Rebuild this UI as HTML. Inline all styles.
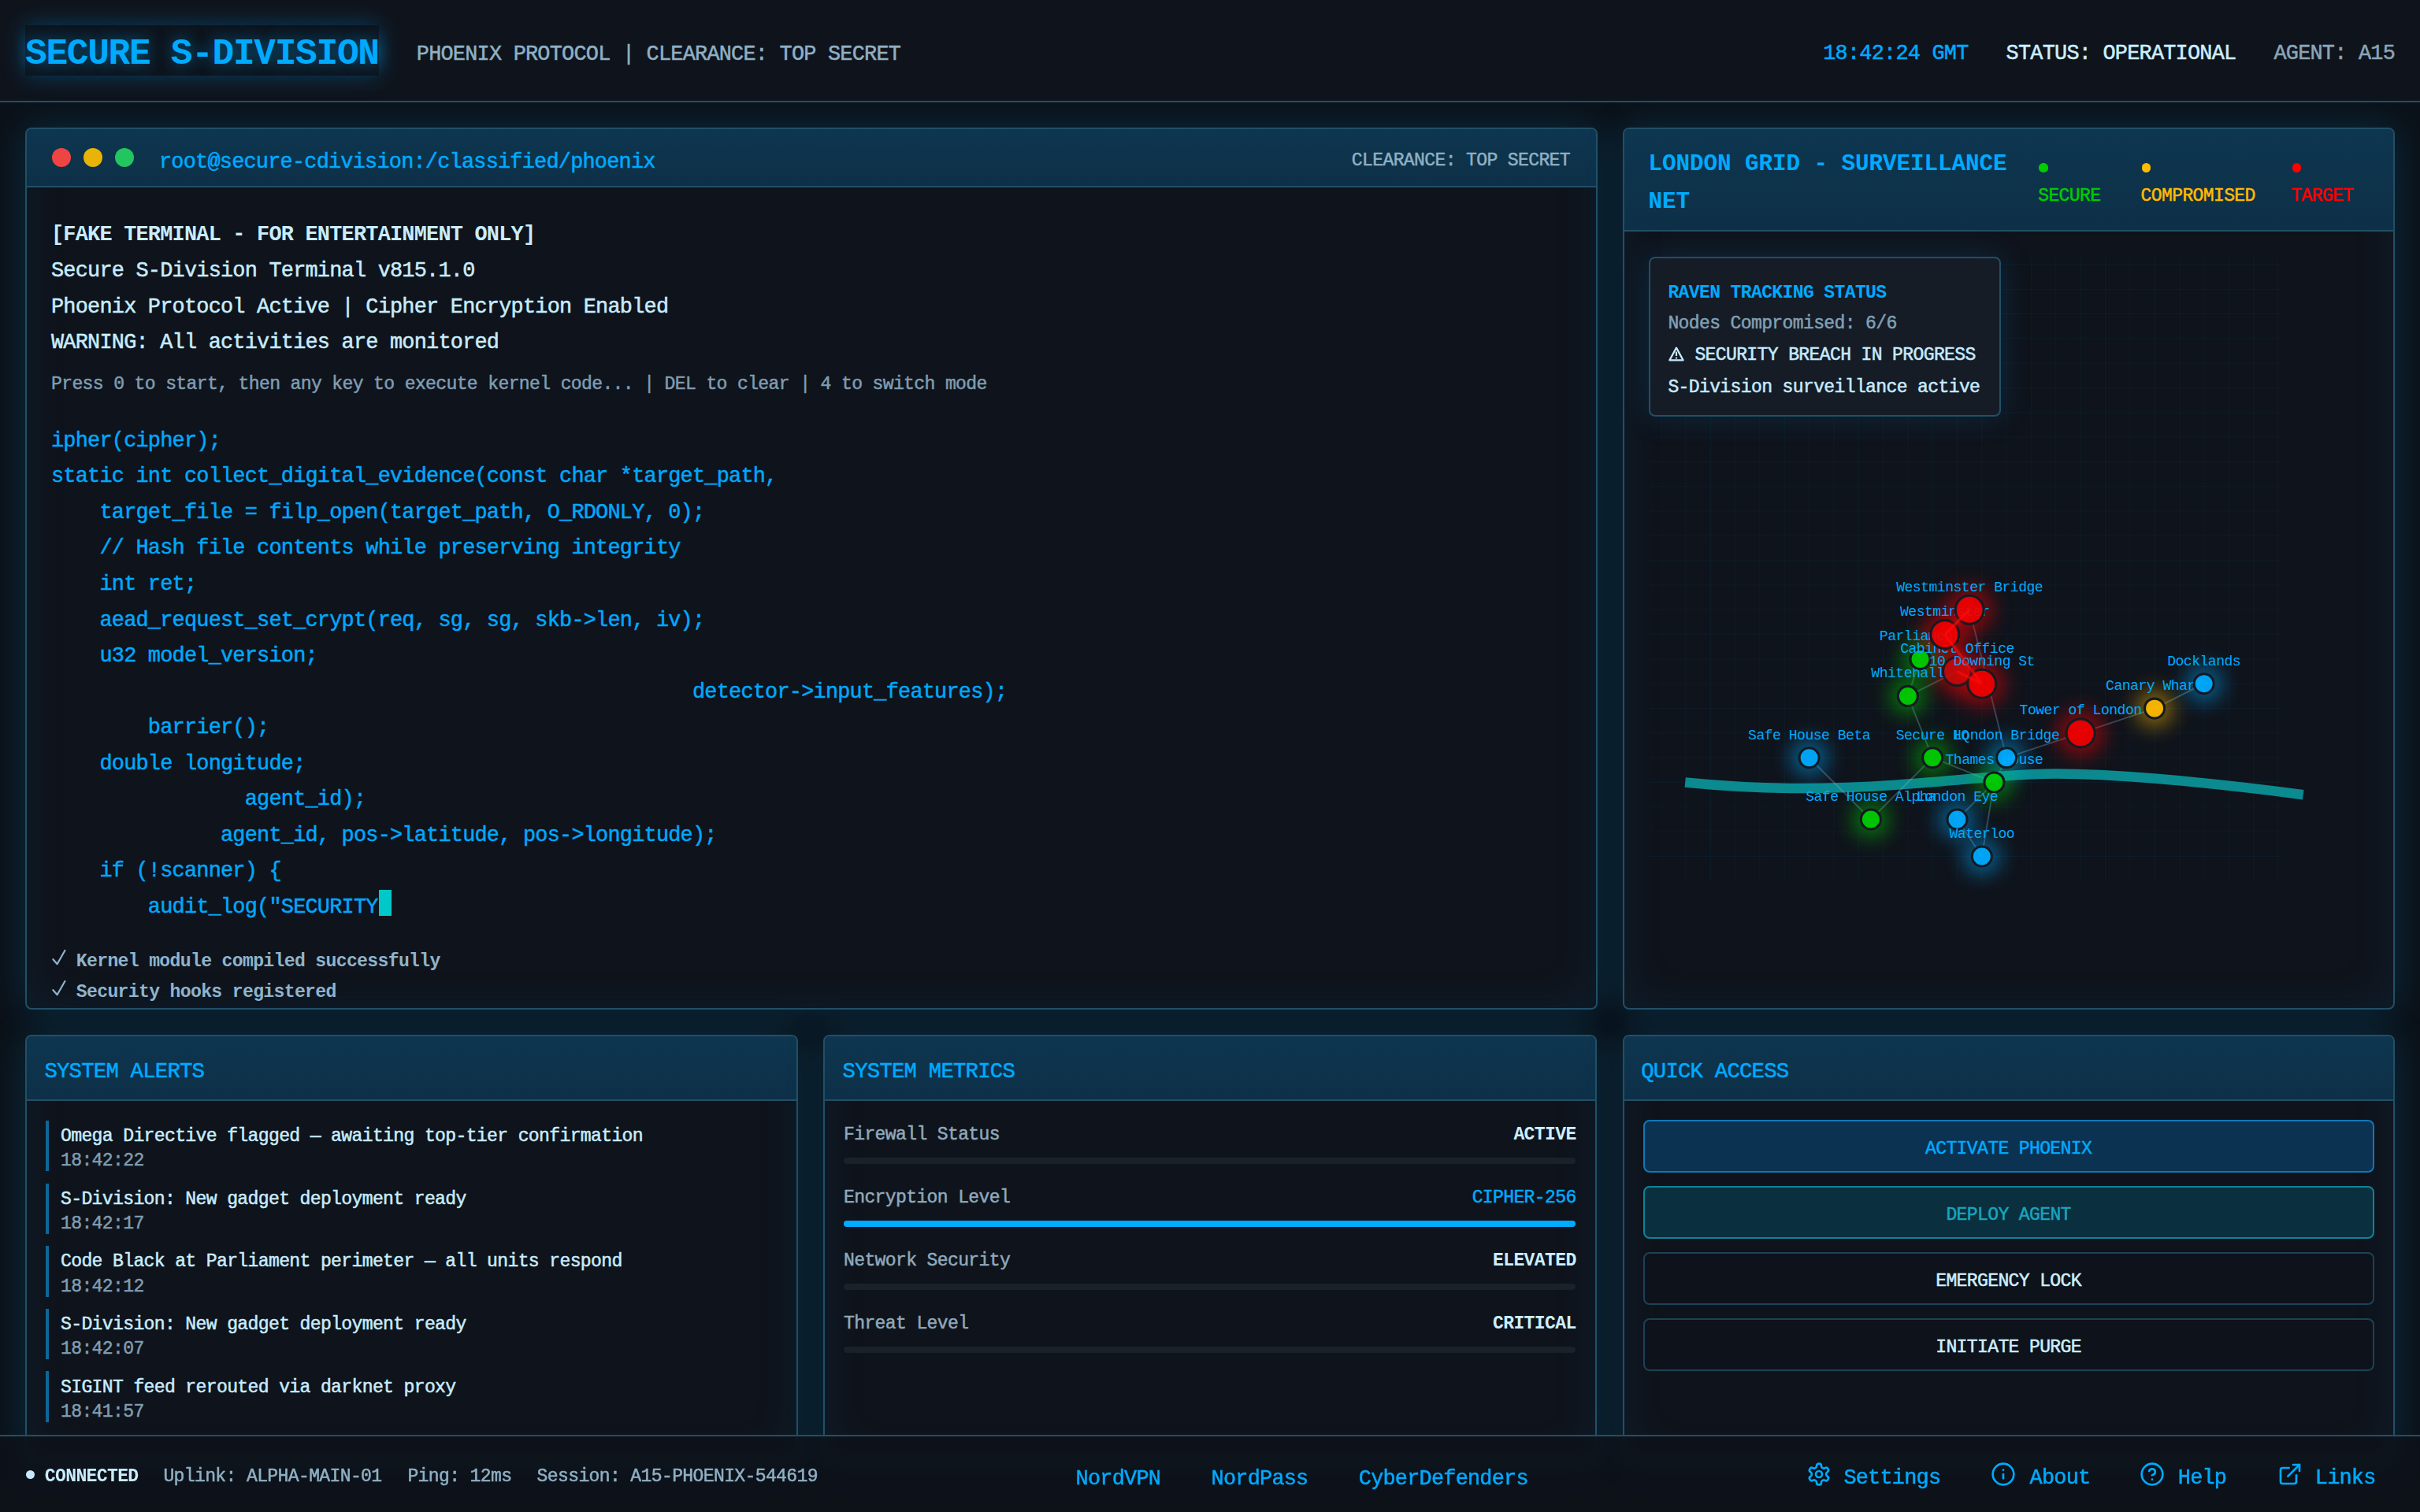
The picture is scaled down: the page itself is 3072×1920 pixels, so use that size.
<!DOCTYPE html><html><head><meta charset="utf-8"><title>Secure S-Division</title><style>
*{box-sizing:border-box;margin:0;padding:0}
html,body{width:1536px;height:960px;overflow:hidden;background:#0b1118}
@media (min-width:2400px){html{zoom:2}}
body{position:relative;font-family:"Liberation Mono", monospace;color:#d8eefc}
.t{position:absolute;white-space:pre;line-height:20px;height:20px;-webkit-text-stroke:0.25px currentColor}
#hdr{position:absolute;left:0;top:0;width:1536px;height:65px;background:#0f141c;border-bottom:1px solid #224f66}
#title{position:absolute;left:16px;top:16px;width:224.5px;height:32px;background:#0d141c;box-shadow:0 0 14px rgba(0,150,230,.35)}
.panel{position:absolute;border:1px solid #224f66;border-radius:4px;background:#0f131b;box-shadow:0 0 24px rgba(0,160,240,.2), inset 0 0 30px rgba(0,160,240,.08);overflow:hidden}
.ph{position:absolute;left:0;top:0;right:0;background:linear-gradient(180deg,#0e3650 0%,#0d3047 100%);border-bottom:1px solid #224f66}
.dot{position:absolute;border-radius:50%}
.chk{position:absolute}
.ic{position:absolute}
#ovl{position:absolute;border:1px solid #224f66;border-radius:4px;background:#161c26;box-shadow:0 0 20px rgba(0,150,230,.18)}
#map{position:absolute;overflow:visible}
.ml{font-family:"Liberation Mono", monospace;font-size:11.55px;letter-spacing:-0.331px;fill:#00aaff}
.btn{position:absolute;border:1px solid;border-radius:4px}
#ftr{position:absolute;left:0;top:911px;width:1536px;height:49px;background:rgba(14,18,25,.8);border-top:1px solid #224f66;backdrop-filter:blur(4px)}
</style></head><body>
<div id="hdr"></div>
<div id="title"></div>
<div class="t " style="left:16.00px;top:24.30px;font-size:23.100px;letter-spacing:-0.662px;color:#00aaff;font-weight:700;-webkit-text-stroke:0;text-shadow:0 0 10px rgba(0,170,255,.55);">SECURE S-DIVISION</div>
<div class="t " style="left:264.40px;top:24.50px;font-size:13.440px;letter-spacing:-0.385px;color:#8fb0c4;">PHOENIX PROTOCOL | CLEARANCE: TOP SECRET</div>
<div class="t " style="right:16.00px;top:24.10px;font-size:13.440px;letter-spacing:-0.385px;color:#8aa5b8;">AGENT: A15</div>
<div class="t " style="right:116.80px;top:24.10px;font-size:13.440px;letter-spacing:-0.385px;color:#cdeefe;">STATUS: OPERATIONAL</div>
<div class="t " style="right:286.72px;top:24.10px;font-size:13.440px;letter-spacing:-0.385px;color:#00aaff;">18:42:24 GMT</div>
<div class="panel" style="left:16px;top:81px;width:997.8px;height:560px;"><div class="ph" style="height:37px"></div></div>
<div class="dot" style="left:33px;top:94px;width:12px;height:12px;background:#ef4444"></div>
<div class="dot" style="left:53px;top:94px;width:12px;height:12px;background:#eab308"></div>
<div class="dot" style="left:73px;top:94px;width:12px;height:12px;background:#22c55e"></div>
<div class="t " style="left:101.00px;top:93.10px;font-size:13.440px;letter-spacing:-0.385px;color:#00aaff;">root@secure-cdivision:/classified/phoenix</div>
<div class="t " style="right:539.50px;top:91.80px;font-size:11.550px;letter-spacing:-0.331px;color:#8fb0c4;">CLEARANCE: TOP SECRET</div>
<div class="t " style="left:32.50px;top:139.10px;font-size:13.440px;letter-spacing:-0.385px;color:#c8ecfc;font-weight:700;-webkit-text-stroke:0;">[FAKE TERMINAL - FOR ENTERTAINMENT ONLY]</div>
<div class="t " style="left:32.50px;top:161.93px;font-size:13.440px;letter-spacing:-0.385px;color:#c8ecfc;">Secure S-Division Terminal v815.1.0</div>
<div class="t " style="left:32.50px;top:184.76px;font-size:13.440px;letter-spacing:-0.385px;color:#c8ecfc;">Phoenix Protocol Active | Cipher Encryption Enabled</div>
<div class="t " style="left:32.50px;top:207.59px;font-size:13.440px;letter-spacing:-0.385px;color:#c8ecfc;">WARNING: All activities are monitored</div>
<div class="t " style="left:32.50px;top:234.00px;font-size:11.550px;letter-spacing:-0.331px;color:#7f9db2;">Press 0 to start, then any key to execute kernel code... | DEL to clear | 4 to switch mode</div>
<div class="t " style="left:32.50px;top:269.90px;font-size:13.440px;letter-spacing:-0.385px;color:#00a8fc;">ipher(cipher);</div>
<div class="t " style="left:32.50px;top:292.67px;font-size:13.440px;letter-spacing:-0.385px;color:#00a8fc;">static int collect_digital_evidence(const char *target_path,</div>
<div class="t " style="left:32.50px;top:315.44px;font-size:13.440px;letter-spacing:-0.385px;color:#00a8fc;">    target_file = filp_open(target_path, O_RDONLY, 0);</div>
<div class="t " style="left:32.50px;top:338.21px;font-size:13.440px;letter-spacing:-0.385px;color:#00a8fc;">    // Hash file contents while preserving integrity</div>
<div class="t " style="left:32.50px;top:360.98px;font-size:13.440px;letter-spacing:-0.385px;color:#00a8fc;">    int ret;</div>
<div class="t " style="left:32.50px;top:383.75px;font-size:13.440px;letter-spacing:-0.385px;color:#00a8fc;">    aead_request_set_crypt(req, sg, sg, skb-&gt;len, iv);</div>
<div class="t " style="left:32.50px;top:406.52px;font-size:13.440px;letter-spacing:-0.385px;color:#00a8fc;">    u32 model_version;</div>
<div class="t " style="left:32.50px;top:429.29px;font-size:13.440px;letter-spacing:-0.385px;color:#00a8fc;">                                                     detector-&gt;input_features);</div>
<div class="t " style="left:32.50px;top:452.06px;font-size:13.440px;letter-spacing:-0.385px;color:#00a8fc;">        barrier();</div>
<div class="t " style="left:32.50px;top:474.83px;font-size:13.440px;letter-spacing:-0.385px;color:#00a8fc;">    double longitude;</div>
<div class="t " style="left:32.50px;top:497.60px;font-size:13.440px;letter-spacing:-0.385px;color:#00a8fc;">                agent_id);</div>
<div class="t " style="left:32.50px;top:520.37px;font-size:13.440px;letter-spacing:-0.385px;color:#00a8fc;">              agent_id, pos-&gt;latitude, pos-&gt;longitude);</div>
<div class="t " style="left:32.50px;top:543.14px;font-size:13.440px;letter-spacing:-0.385px;color:#00a8fc;">    if (!scanner) {</div>
<div class="t " style="left:32.50px;top:565.91px;font-size:13.440px;letter-spacing:-0.385px;color:#00a8fc;">        audit_log("SECURITY</div>
<div style="position:absolute;left:240.7px;top:565px;width:8px;height:16.5px;background:#00c8c8"></div>
<div class="t " style="left:48.40px;top:600.70px;font-size:11.550px;letter-spacing:-0.331px;color:#8fb4cc;font-weight:700;-webkit-text-stroke:0;">Kernel module compiled successfully</div>
<svg class="chk" style="left:33px;top:602.6px" width="9" height="11" viewBox="0 0 9 11"><path d="M0.7 6.6 L3.3 9.6 L8.2 1.0" fill="none" stroke="#8fb4cc" stroke-width="1.1" stroke-linecap="round" stroke-linejoin="round"/></svg>
<div class="t " style="left:48.40px;top:620.10px;font-size:11.550px;letter-spacing:-0.331px;color:#8fb4cc;font-weight:700;-webkit-text-stroke:0;">Security hooks registered</div>
<svg class="chk" style="left:33px;top:622.0px" width="9" height="11" viewBox="0 0 9 11"><path d="M0.7 6.6 L3.3 9.6 L8.2 1.0" fill="none" stroke="#8fb4cc" stroke-width="1.1" stroke-linecap="round" stroke-linejoin="round"/></svg>
<div class="panel" style="left:1029.8px;top:81px;width:490.2px;height:560px;"><div class="ph" style="height:65px"></div></div>
<div class="t " style="left:1046.30px;top:94.45px;font-size:14.700px;letter-spacing:-0.071px;color:#00aaff;font-weight:700;-webkit-text-stroke:0;">LONDON GRID - SURVEILLANCE</div>
<div class="t " style="left:1046.30px;top:118.25px;font-size:14.700px;letter-spacing:-0.071px;color:#00aaff;font-weight:700;-webkit-text-stroke:0;">NET</div>
<div class="dot" style="left:1294.2px;top:103.7px;width:5.6px;height:5.6px;background:#00cc00"></div>
<div class="t " style="left:1293.60px;top:114.40px;font-size:11.550px;letter-spacing:-0.331px;color:#00cc00;">SECURE</div>
<div class="dot" style="left:1359.4px;top:103.7px;width:5.6px;height:5.6px;background:#ffbb00"></div>
<div class="t " style="left:1358.80px;top:114.40px;font-size:11.550px;letter-spacing:-0.331px;color:#ffbb00;">COMPROMISED</div>
<div class="dot" style="left:1454.8px;top:103.7px;width:5.6px;height:5.6px;background:#ff0000"></div>
<div class="t " style="left:1454.20px;top:114.40px;font-size:11.550px;letter-spacing:-0.331px;color:#ff0000;">TARGET</div>
<svg id="map" style="left:1046.6px;top:163.8px" width="401.68" height="395.42" viewBox="0 0 513 505"><defs><filter id="gl" x="-200%" y="-200%" width="500%" height="500%"><feGaussianBlur stdDeviation="8"/></filter><filter id="gl2" x="-50%" y="-50%" width="200%" height="200%"><feGaussianBlur stdDeviation="2"/></filter></defs><g stroke="rgba(0,170,255,0.06)" stroke-width="0.64"><line x1="10" y1="-1" x2="10" y2="505"/><line x1="30" y1="-1" x2="30" y2="505"/><line x1="50" y1="-1" x2="50" y2="505"/><line x1="70" y1="-1" x2="70" y2="505"/><line x1="90" y1="-1" x2="90" y2="505"/><line x1="110" y1="-1" x2="110" y2="505"/><line x1="130" y1="-1" x2="130" y2="505"/><line x1="150" y1="-1" x2="150" y2="505"/><line x1="170" y1="-1" x2="170" y2="505"/><line x1="190" y1="-1" x2="190" y2="505"/><line x1="210" y1="-1" x2="210" y2="505"/><line x1="230" y1="-1" x2="230" y2="505"/><line x1="250" y1="-1" x2="250" y2="505"/><line x1="270" y1="-1" x2="270" y2="505"/><line x1="290" y1="-1" x2="290" y2="505"/><line x1="310" y1="-1" x2="310" y2="505"/><line x1="330" y1="-1" x2="330" y2="505"/><line x1="350" y1="-1" x2="350" y2="505"/><line x1="370" y1="-1" x2="370" y2="505"/><line x1="390" y1="-1" x2="390" y2="505"/><line x1="410" y1="-1" x2="410" y2="505"/><line x1="430" y1="-1" x2="430" y2="505"/><line x1="450" y1="-1" x2="450" y2="505"/><line x1="470" y1="-1" x2="470" y2="505"/><line x1="490" y1="-1" x2="490" y2="505"/><line x1="510" y1="-1" x2="510" y2="505"/><line x1="0" y1="5" x2="513" y2="5"/><line x1="0" y1="25" x2="513" y2="25"/><line x1="0" y1="45" x2="513" y2="45"/><line x1="0" y1="65" x2="513" y2="65"/><line x1="0" y1="85" x2="513" y2="85"/><line x1="0" y1="105" x2="513" y2="105"/><line x1="0" y1="125" x2="513" y2="125"/><line x1="0" y1="145" x2="513" y2="145"/><line x1="0" y1="165" x2="513" y2="165"/><line x1="0" y1="185" x2="513" y2="185"/><line x1="0" y1="205" x2="513" y2="205"/><line x1="0" y1="225" x2="513" y2="225"/><line x1="0" y1="245" x2="513" y2="245"/><line x1="0" y1="265" x2="513" y2="265"/><line x1="0" y1="285" x2="513" y2="285"/><line x1="0" y1="305" x2="513" y2="305"/><line x1="0" y1="325" x2="513" y2="325"/><line x1="0" y1="345" x2="513" y2="345"/><line x1="0" y1="365" x2="513" y2="365"/><line x1="0" y1="385" x2="513" y2="385"/><line x1="0" y1="405" x2="513" y2="405"/><line x1="0" y1="425" x2="513" y2="425"/><line x1="0" y1="445" x2="513" y2="445"/><line x1="0" y1="465" x2="513" y2="465"/><line x1="0" y1="485" x2="513" y2="485"/></g><path d="M29.5 425 C 90 431, 140 431, 200 427 S 290 418, 330 418 S 440 423, 530.5 435" fill="none" stroke="#0b8a90" stroke-width="8"/><g stroke="rgba(140,180,210,0.32)" stroke-width="1.2"><line x1="260" y1="285" x2="290" y2="405"/><line x1="210" y1="355" x2="250" y2="335"/><line x1="210" y1="355" x2="220" y2="325"/><line x1="210" y1="355" x2="230" y2="405"/><line x1="230" y1="405" x2="280" y2="425"/><line x1="230" y1="405" x2="180" y2="455"/><line x1="130" y1="405" x2="180" y2="455"/><line x1="290" y1="405" x2="350" y2="385"/><line x1="350" y1="385" x2="410" y2="365"/><line x1="410" y1="365" x2="450" y2="345"/><line x1="280" y1="425" x2="290" y2="405"/><line x1="280" y1="425" x2="270" y2="485"/><line x1="250" y1="455" x2="280" y2="425"/><line x1="250" y1="455" x2="270" y2="485"/></g><circle cx="210" cy="355" r="15" fill="#00cc00" opacity="0.5" filter="url(#gl)"/><circle cx="220" cy="325" r="15" fill="#00cc00" opacity="0.5" filter="url(#gl)"/><circle cx="250" cy="335" r="18.5" fill="#ff0000" opacity="0.5" filter="url(#gl)"/><circle cx="270" cy="345" r="18.5" fill="#ff0000" opacity="0.5" filter="url(#gl)"/><circle cx="240" cy="305" r="18.5" fill="#ff0000" opacity="0.5" filter="url(#gl)"/><circle cx="260" cy="285" r="18.5" fill="#ff0000" opacity="0.5" filter="url(#gl)"/><circle cx="230" cy="405" r="15" fill="#00cc00" opacity="0.5" filter="url(#gl)"/><circle cx="280" cy="425" r="15" fill="#00cc00" opacity="0.5" filter="url(#gl)"/><circle cx="290" cy="405" r="15" fill="#00aaff" opacity="0.5" filter="url(#gl)"/><circle cx="130" cy="405" r="15" fill="#00aaff" opacity="0.5" filter="url(#gl)"/><circle cx="180" cy="455" r="15" fill="#00cc00" opacity="0.5" filter="url(#gl)"/><circle cx="250" cy="455" r="15" fill="#00aaff" opacity="0.5" filter="url(#gl)"/><circle cx="270" cy="485" r="15" fill="#00aaff" opacity="0.5" filter="url(#gl)"/><circle cx="350" cy="385" r="18.5" fill="#ff0000" opacity="0.5" filter="url(#gl)"/><circle cx="410" cy="365" r="15" fill="#ffbb00" opacity="0.5" filter="url(#gl)"/><circle cx="450" cy="345" r="15" fill="#00aaff" opacity="0.5" filter="url(#gl)"/><circle cx="210" cy="355" r="8" fill="#00cc00" fill-opacity="0.92" stroke="#151a22" stroke-width="2"/><text x="210" y="340" text-anchor="middle" class="ml">Whitehall</text><circle cx="220" cy="325" r="8" fill="#00cc00" fill-opacity="0.92" stroke="#151a22" stroke-width="2"/><text x="220" y="310" text-anchor="middle" class="ml">Parliament</text><circle cx="250" cy="335" r="11.5" fill="#cc0a0a" fill-opacity="0.92" stroke="#151a22" stroke-width="2" opacity="0.85"/><text x="250" y="320" text-anchor="middle" class="ml">Cabinet Office</text><circle cx="270" cy="345" r="11.5" fill="#ee0000" fill-opacity="0.92" stroke="#151a22" stroke-width="2"/><text x="270" y="330" text-anchor="middle" class="ml">10 Downing St</text><circle cx="240" cy="305" r="11.5" fill="#ee0000" fill-opacity="0.92" stroke="#151a22" stroke-width="2"/><text x="240" y="290" text-anchor="middle" class="ml">Westminster</text><circle cx="260" cy="285" r="11.5" fill="#ee0000" fill-opacity="0.92" stroke="#151a22" stroke-width="2"/><text x="260" y="270" text-anchor="middle" class="ml">Westminster Bridge</text><circle cx="230" cy="405" r="8" fill="#00cc00" fill-opacity="0.92" stroke="#151a22" stroke-width="2"/><text x="230" y="390" text-anchor="middle" class="ml">Secure HQ</text><circle cx="280" cy="425" r="8" fill="#00cc00" fill-opacity="0.92" stroke="#151a22" stroke-width="2"/><text x="280" y="410" text-anchor="middle" class="ml">Thames House</text><circle cx="290" cy="405" r="8" fill="#00aaff" fill-opacity="0.92" stroke="#151a22" stroke-width="2"/><text x="290" y="390" text-anchor="middle" class="ml">London Bridge</text><circle cx="130" cy="405" r="8" fill="#00aaff" fill-opacity="0.92" stroke="#151a22" stroke-width="2"/><text x="130" y="390" text-anchor="middle" class="ml">Safe House Beta</text><circle cx="180" cy="455" r="8" fill="#00cc00" fill-opacity="0.92" stroke="#151a22" stroke-width="2"/><text x="180" y="440" text-anchor="middle" class="ml">Safe House Alpha</text><circle cx="250" cy="455" r="8" fill="#00aaff" fill-opacity="0.92" stroke="#151a22" stroke-width="2"/><text x="250" y="440" text-anchor="middle" class="ml">London Eye</text><circle cx="270" cy="485" r="8" fill="#00aaff" fill-opacity="0.92" stroke="#151a22" stroke-width="2"/><text x="270" y="470" text-anchor="middle" class="ml">Waterloo</text><circle cx="350" cy="385" r="11.5" fill="#ee0000" fill-opacity="0.92" stroke="#151a22" stroke-width="2"/><text x="350" y="370" text-anchor="middle" class="ml">Tower of London</text><circle cx="410" cy="365" r="8" fill="#ffbb00" fill-opacity="0.92" stroke="#151a22" stroke-width="2"/><text x="410" y="350" text-anchor="middle" class="ml">Canary Wharf</text><circle cx="450" cy="345" r="8" fill="#00aaff" fill-opacity="0.92" stroke="#151a22" stroke-width="2"/><text x="450" y="330" text-anchor="middle" class="ml">Docklands</text><g stroke="#ff0000" stroke-width="5" opacity="0.35" filter="url(#gl2)"><line x1="260" y1="285" x2="240" y2="305"/><line x1="240" y1="305" x2="270" y2="345"/><line x1="250" y1="335" x2="270" y2="345"/></g><g stroke="#ff1010" stroke-width="2" opacity="0.55"><line x1="260" y1="285" x2="240" y2="305"/><line x1="240" y1="305" x2="270" y2="345"/><line x1="250" y1="335" x2="270" y2="345"/></g></svg>
<div id="ovl" style="left:1046.6px;top:163px;width:223.5px;height:101.5px"></div>
<div class="t " style="left:1058.70px;top:175.80px;font-size:11.550px;letter-spacing:-0.331px;color:#00aaff;font-weight:700;-webkit-text-stroke:0;">RAVEN TRACKING STATUS</div>
<div class="t " style="left:1058.70px;top:195.50px;font-size:11.550px;letter-spacing:-0.331px;color:#80a0b4;">Nodes Compromised: 6/6</div>
<div class="t " style="left:1075.70px;top:215.70px;font-size:11.550px;letter-spacing:-0.331px;color:#c6ebff;">SECURITY BREACH IN PROGRESS</div>
<svg class="chk" style="left:1059.2px;top:219.8px" width="10" height="9.5" viewBox="0 0 10 9.5"><path d="M5 0.8 L9.3 8.7 L0.7 8.7 Z" fill="none" stroke="#c6ebff" stroke-width="1.1" stroke-linejoin="round"/><path d="M5 3.3 V6" stroke="#c6ebff" stroke-width="1.1"/><circle cx="5" cy="7.3" r="0.6" fill="#c6ebff"/></svg>
<div class="t " style="left:1058.70px;top:236.20px;font-size:11.550px;letter-spacing:-0.331px;color:#c6ebff;">S-Division surveillance active</div>
<div class="panel" style="left:16px;top:657px;width:490.67px;height:271.5px;"><div class="ph" style="height:41px"></div></div>
<div class="t " style="left:28.20px;top:670.55px;font-size:13.650px;letter-spacing:-0.391px;color:#00aaff;">SYSTEM ALERTS</div>
<div style="position:absolute;left:29px;top:711.5px;width:2.2px;height:32.2px;background:#0d6797"></div>
<div class="t " style="left:38.50px;top:711.60px;font-size:11.550px;letter-spacing:-0.331px;color:#c8ecfc;">Omega Directive flagged — awaiting top-tier confirmation</div>
<div class="t " style="left:38.50px;top:727.20px;font-size:11.550px;letter-spacing:-0.331px;color:#7f9db2;">18:42:22</div>
<div style="position:absolute;left:29px;top:751.3px;width:2.2px;height:32.2px;background:#0d6797"></div>
<div class="t " style="left:38.50px;top:751.40px;font-size:11.550px;letter-spacing:-0.331px;color:#c8ecfc;">S-Division: New gadget deployment ready</div>
<div class="t " style="left:38.50px;top:767.00px;font-size:11.550px;letter-spacing:-0.331px;color:#7f9db2;">18:42:17</div>
<div style="position:absolute;left:29px;top:791.1px;width:2.2px;height:32.2px;background:#0d6797"></div>
<div class="t " style="left:38.50px;top:791.20px;font-size:11.550px;letter-spacing:-0.331px;color:#c8ecfc;">Code Black at Parliament perimeter — all units respond</div>
<div class="t " style="left:38.50px;top:806.80px;font-size:11.550px;letter-spacing:-0.331px;color:#7f9db2;">18:42:12</div>
<div style="position:absolute;left:29px;top:830.9px;width:2.2px;height:32.2px;background:#0d6797"></div>
<div class="t " style="left:38.50px;top:831.00px;font-size:11.550px;letter-spacing:-0.331px;color:#c8ecfc;">S-Division: New gadget deployment ready</div>
<div class="t " style="left:38.50px;top:846.60px;font-size:11.550px;letter-spacing:-0.331px;color:#7f9db2;">18:42:07</div>
<div style="position:absolute;left:29px;top:870.7px;width:2.2px;height:32.2px;background:#0d6797"></div>
<div class="t " style="left:38.50px;top:870.80px;font-size:11.550px;letter-spacing:-0.331px;color:#c8ecfc;">SIGINT feed rerouted via darknet proxy</div>
<div class="t " style="left:38.50px;top:886.40px;font-size:11.550px;letter-spacing:-0.331px;color:#7f9db2;">18:41:57</div>
<div class="panel" style="left:522.67px;top:657px;width:490.67px;height:271.5px;"><div class="ph" style="height:41px"></div></div>
<div class="t " style="left:534.80px;top:670.55px;font-size:13.650px;letter-spacing:-0.391px;color:#00aaff;">SYSTEM METRICS</div>
<div class="t " style="left:535.50px;top:710.50px;font-size:11.550px;letter-spacing:-0.331px;color:#8fa9bb;">Firewall Status</div>
<div class="t " style="right:535.70px;top:710.50px;font-size:11.550px;letter-spacing:-0.331px;color:#cdeefe;font-weight:700;-webkit-text-stroke:0;">ACTIVE</div>
<div style="position:absolute;left:535.6px;top:735.1px;width:464.6px;height:4px;border-radius:2px;background:#1b212b"></div>
<div class="t " style="left:535.50px;top:750.57px;font-size:11.550px;letter-spacing:-0.331px;color:#8fa9bb;">Encryption Level</div>
<div class="t " style="right:535.70px;top:750.57px;font-size:11.550px;letter-spacing:-0.331px;color:#00aaff;">CIPHER-256</div>
<div style="position:absolute;left:535.6px;top:775.1px;width:464.6px;height:4px;border-radius:2px;background:#1b212b"></div>
<div style="position:absolute;left:535.6px;top:775.1px;width:464.6px;height:4px;border-radius:2px;background:#00aaff"></div>
<div class="t " style="left:535.50px;top:790.64px;font-size:11.550px;letter-spacing:-0.331px;color:#8fa9bb;">Network Security</div>
<div class="t " style="right:535.70px;top:790.64px;font-size:11.550px;letter-spacing:-0.331px;color:#cdeefe;font-weight:700;-webkit-text-stroke:0;">ELEVATED</div>
<div style="position:absolute;left:535.6px;top:815.1px;width:464.6px;height:4px;border-radius:2px;background:#1b212b"></div>
<div class="t " style="left:535.50px;top:830.71px;font-size:11.550px;letter-spacing:-0.331px;color:#8fa9bb;">Threat Level</div>
<div class="t " style="right:535.70px;top:830.71px;font-size:11.550px;letter-spacing:-0.331px;color:#cdeefe;font-weight:700;-webkit-text-stroke:0;">CRITICAL</div>
<div style="position:absolute;left:535.6px;top:855.1px;width:464.6px;height:4px;border-radius:2px;background:#1b212b"></div>
<div class="panel" style="left:1029.8px;top:657px;width:490.2px;height:271.5px;"><div class="ph" style="height:41px"></div></div>
<div class="t " style="left:1041.60px;top:670.55px;font-size:13.650px;letter-spacing:-0.391px;color:#00aaff;">QUICK ACCESS</div>
<div class="btn" style="left:1042.8px;top:711.2px;width:464px;height:33.3px;border-color:#0f78b8;background:#0b3250"></div>
<div class="t " style="left:1274.80px;top:719.60px;font-size:11.550px;letter-spacing:-0.331px;color:#00aaff;transform:translateX(-50%);">ACTIVATE PHOENIX</div>
<div class="btn" style="left:1042.8px;top:753.2px;width:464px;height:33.3px;border-color:#0c8599;background:#0a2f3e"></div>
<div class="t " style="left:1274.80px;top:761.60px;font-size:11.550px;letter-spacing:-0.331px;color:#17a6bd;transform:translateX(-50%);">DEPLOY AGENT</div>
<div class="btn" style="left:1042.8px;top:795.2px;width:464px;height:33.3px;border-color:#1c4257;background:#0e121a"></div>
<div class="t " style="left:1274.80px;top:803.60px;font-size:11.550px;letter-spacing:-0.331px;color:#cdeefe;transform:translateX(-50%);">EMERGENCY LOCK</div>
<div class="btn" style="left:1042.8px;top:837.2px;width:464px;height:33.3px;border-color:#1c4257;background:#0e121a"></div>
<div class="t " style="left:1274.80px;top:845.60px;font-size:11.550px;letter-spacing:-0.331px;color:#cdeefe;transform:translateX(-50%);">INITIATE PURGE</div>
<div id="ftr"></div>
<div class="dot" style="left:16.4px;top:933.4px;width:5.8px;height:5.8px;background:#c6e9ff"></div>
<div class="t " style="left:28.40px;top:927.50px;font-size:11.550px;letter-spacing:-0.331px;color:#c8ecfc;font-weight:700;-webkit-text-stroke:0;">CONNECTED</div>
<div class="t " style="left:103.70px;top:927.50px;font-size:11.550px;letter-spacing:-0.331px;color:#8fb0c4;">Uplink: ALPHA-MAIN-01</div>
<div class="t " style="left:258.70px;top:927.50px;font-size:11.550px;letter-spacing:-0.331px;color:#8fb0c4;">Ping: 12ms</div>
<div class="t " style="left:340.80px;top:927.50px;font-size:11.550px;letter-spacing:-0.331px;color:#8fb0c4;">Session: A15-PHOENIX-544619</div>
<div class="t " style="left:682.80px;top:929.00px;font-size:13.440px;letter-spacing:-0.385px;color:#00aaff;">NordVPN</div>
<div class="t " style="left:768.80px;top:929.00px;font-size:13.440px;letter-spacing:-0.385px;color:#00aaff;">NordPass</div>
<div class="t " style="left:862.40px;top:929.00px;font-size:13.440px;letter-spacing:-0.385px;color:#00aaff;">CyberDefenders</div>
<svg class="ic" style="left:1146.4px;top:928px" width="16" height="16" viewBox="0 0 24 24" fill="none" stroke="#00aaff" stroke-width="2" stroke-linecap="round" stroke-linejoin="round"><path d="M12.22 2h-.44a2 2 0 0 0-2 2v.18a2 2 0 0 1-1 1.73l-.43.25a2 2 0 0 1-2 0l-.15-.08a2 2 0 0 0-2.73.73l-.22.38a2 2 0 0 0 .73 2.73l.15.1a2 2 0 0 1 1 1.72v.51a2 2 0 0 1-1 1.74l-.15.09a2 2 0 0 0-.73 2.73l.22.38a2 2 0 0 0 2.73.73l.15-.08a2 2 0 0 1 2 0l.43.25a2 2 0 0 1 1 1.73V20a2 2 0 0 0 2 2h.44a2 2 0 0 0 2-2v-.18a2 2 0 0 1 1-1.73l.43-.25a2 2 0 0 1 2 0l.15.08a2 2 0 0 0 2.73-.73l.22-.39a2 2 0 0 0-.73-2.73l-.15-.08a2 2 0 0 1-1-1.74v-.5a2 2 0 0 1 1-1.74l.15-.09a2 2 0 0 0 .73-2.73l-.22-.38a2 2 0 0 0-2.73-.73l-.15.08a2 2 0 0 1-2 0l-.43-.25a2 2 0 0 1-1-1.73V4a2 2 0 0 0-2-2z"/><circle cx="12" cy="12" r="3"/></svg>
<div class="t " style="left:1170.20px;top:928.50px;font-size:13.440px;letter-spacing:-0.385px;color:#00aaff;">Settings</div>
<svg class="ic" style="left:1263.4px;top:928px" width="16" height="16" viewBox="0 0 24 24" fill="none" stroke="#00aaff" stroke-width="2" stroke-linecap="round" stroke-linejoin="round"><circle cx="12" cy="12" r="10"/><path d="M12 16v-4"/><path d="M12 8h.01"/></svg>
<div class="t " style="left:1288.30px;top:928.50px;font-size:13.440px;letter-spacing:-0.385px;color:#00aaff;">About</div>
<svg class="ic" style="left:1358.0px;top:928px" width="16" height="16" viewBox="0 0 24 24" fill="none" stroke="#00aaff" stroke-width="2" stroke-linecap="round" stroke-linejoin="round"><circle cx="12" cy="12" r="10"/><path d="M9.09 9a3 3 0 0 1 5.83 1c0 2-3 3-3 3"/><path d="M12 17h.01"/></svg>
<div class="t " style="left:1382.40px;top:928.50px;font-size:13.440px;letter-spacing:-0.385px;color:#00aaff;">Help</div>
<svg class="ic" style="left:1445.6px;top:928px" width="16" height="16" viewBox="0 0 24 24" fill="none" stroke="#00aaff" stroke-width="2" stroke-linecap="round" stroke-linejoin="round"><path d="M15 3h6v6"/><path d="M10 14 21 3"/><path d="M18 13v6a2 2 0 0 1-2 2H5a2 2 0 0 1-2-2V8a2 2 0 0 1 2-2h6"/></svg>
<div class="t " style="left:1469.40px;top:928.50px;font-size:13.440px;letter-spacing:-0.385px;color:#00aaff;">Links</div>
</body></html>
